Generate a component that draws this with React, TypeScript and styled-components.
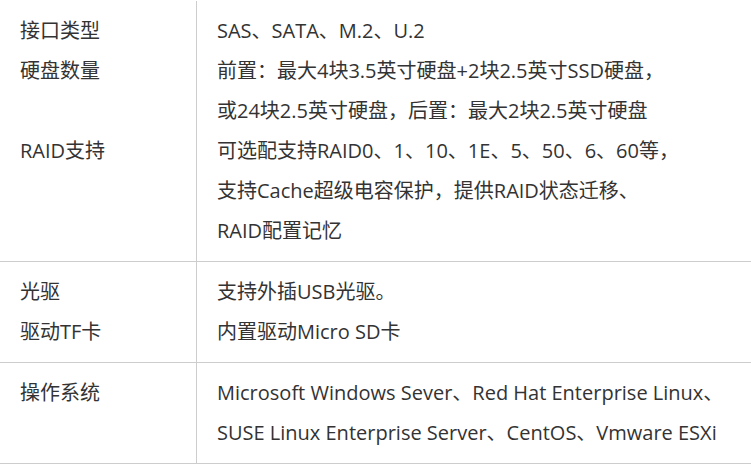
import React from "react";
import styled, { createGlobalStyle } from "styled-components";

const Global = createGlobalStyle`
  html, body { margin: 0; padding: 0; background: #fff; }
  body {
    font-family: "Open Sans", "Noto Sans CJK SC", sans-serif;
    color: #333;
  }
`;

const Table = styled.div`
  width: 751px;
  padding-top: 1px;
`;

const Section = styled.div`
  display: grid;
  grid-template-columns: 197px 1fr;
  border-bottom: 1px solid #cdcdcd;
`;

const LabelCol = styled.div`
  border-right: 1px solid #cdcdcd;
  padding: 10px 0 10px 20px;
`;

const ValueCol = styled.div`
  padding: 10px 0 10px 20px;
`;

const Line = styled.div`
  height: 40px;
  line-height: 40px;
  font-size: 20px;
  white-space: nowrap;
`;

type Item = { label: string; lines: string[] };

const sections: Item[][] = [
  [
    { label: "接口类型", lines: ["SAS、SATA、M.2、U.2"] },
    {
      label: "硬盘数量",
      lines: ["前置：最大4块3.5英寸硬盘+2块2.5英寸SSD硬盘，", "或24块2.5英寸硬盘，后置：最大2块2.5英寸硬盘"],
    },
    {
      label: "RAID支持",
      lines: [
        "可选配支持RAID0、1、10、1E、5、50、6、60等，",
        "支持Cache超级电容保护，提供RAID状态迁移、",
        "RAID配置记忆",
      ],
    },
  ],
  [
    { label: "光驱", lines: ["支持外插USB光驱。"] },
    { label: "驱动TF卡", lines: ["内置驱动Micro SD卡"] },
  ],
  [
    {
      label: "操作系统",
      lines: [
        "Microsoft Windows Sever、Red Hat Enterprise Linux、",
        "SUSE Linux Enterprise Server、CentOS、Vmware ESXi",
      ],
    },
  ],
];

export default function App() {
  return (
    <>
      <Global />
      <Table>
        {sections.map((items, si) => (
          <Section key={si}>
            <LabelCol>
              {items.map((it, i) =>
                it.lines.map((_, li) => <Line key={`${i}-${li}`}>{li === 0 ? it.label : "\u00a0"}</Line>)
              )}
            </LabelCol>
            <ValueCol>
              {items.map((it, i) => it.lines.map((l, li) => <Line key={`${i}-${li}`}>{l}</Line>))}
            </ValueCol>
          </Section>
        ))}
      </Table>
    </>
  );
}
